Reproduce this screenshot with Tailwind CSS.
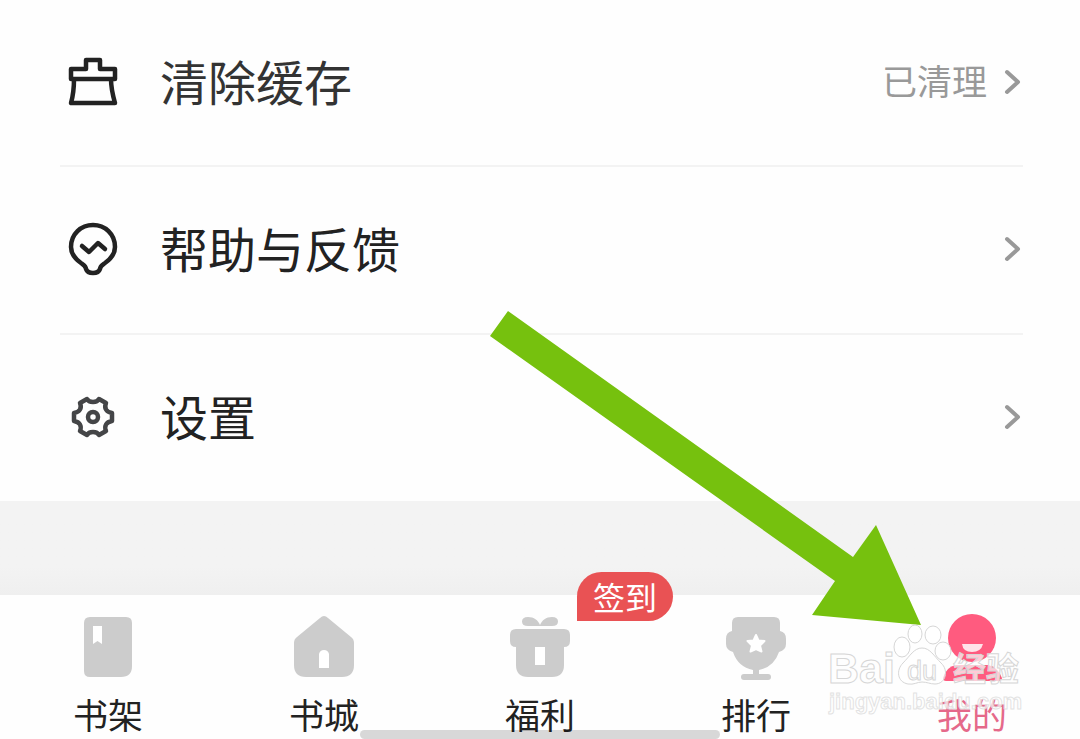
<!DOCTYPE html>
<html lang="zh-CN">
<head>
<meta charset="utf-8">
<meta name="viewport" content="width=device-width, initial-scale=1">
<title>我的</title>
<script src="https://cdn.jsdelivr.net/npm/@tailwindcss/browser@4"></script>
</head>
<body class="relative flex min-h-screen flex-col overflow-hidden bg-[#f3f3f3] font-['Noto_Sans_CJK_SC',sans-serif] text-[#222]">

<main class="bg-[#fefefe] pr-[57px] pl-[60px]">
  <ul class="divide-y-2 divide-[#f3f3f3]">
    <li>
      <button type="button" class="flex h-[165px] w-full items-center pb-[2px] text-left">
        <svg class="ml-2 size-[50px] shrink-0" viewBox="0 0 50 50" fill="none" stroke="#222" stroke-width="4.500" stroke-linejoin="round" aria-hidden="true">
          <path d="M3 12H18V3H32V12H47V22H3ZM6 22C6 31 5 39 3 46H47C45 39 43 31 43 22"/>
        </svg>
        <span class="ml-[42px] flex-1 pb-1 text-[48px] leading-none text-[#333]">清除缓存</span>
        <span class="pb-1 text-[35px] leading-none text-[#999]">已清理</span>
        <svg class="ml-4 h-7 w-5 shrink-0" viewBox="0 0 20 28" fill="none" stroke="#999" stroke-width="4" stroke-linecap="round" stroke-linejoin="round" aria-hidden="true"><path d="M4 4L15 14L4 24"/></svg>
      </button>
    </li>
    <li>
      <button type="button" class="flex h-[166px] w-full items-center pb-[2px] text-left">
        <svg class="ml-2 h-[54px] w-[50px] shrink-0" viewBox="0 0 50 54" fill="none" stroke="#222" stroke-width="4.500" stroke-linecap="round" stroke-linejoin="round" aria-hidden="true">
          <path d="M18 47C18 44 16 43 13 41C6 36 3 31 3 25C3 12 13 3 25 3S47 12 47 25C47 31 44 36 37 41C34 43 32 44 32 47C31 50 28 51 25 51S19 50 18 47Z"/>
          <path d="M14 24L21 30L30 21L37 27"/>
        </svg>
        <span class="ml-[42px] flex-1 pb-1 text-[48px] leading-none">帮助与反馈</span>
        <svg class="ml-4 h-7 w-5 shrink-0" viewBox="0 0 20 28" fill="none" stroke="#999" stroke-width="4" stroke-linecap="round" stroke-linejoin="round" aria-hidden="true"><path d="M4 4L15 14L4 24"/></svg>
      </button>
    </li>
    <li>
      <button type="button" class="flex h-[166px] w-full items-center pb-[2px] text-left">
        <svg class="ml-2 size-[50px] shrink-0" viewBox="0 0 50 50" fill="none" stroke="#444547" stroke-width="4.500" stroke-linejoin="round" aria-hidden="true">
          <path d="M19 7C21 11 29 11 31 7L38 11C36 16 38 20 44 21V29C38 30 36 34 38 39L31 43C29 39 21 39 19 43L12 39C14 34 12 30 6 29V21C12 20 14 16 12 11Z"/>
          <circle cx="25" cy="25" r="5"/>
        </svg>
        <span class="ml-[42px] flex-1 pb-1 text-[48px] leading-none">设置</span>
        <svg class="ml-4 h-7 w-5 shrink-0" viewBox="0 0 20 28" fill="none" stroke="#999" stroke-width="4" stroke-linecap="round" stroke-linejoin="round" aria-hidden="true"><path d="M4 4L15 14L4 24"/></svg>
      </button>
    </li>
  </ul>
</main>

<div class="min-h-[94px] flex-1 bg-linear-to-b from-[#f3f3f3] from-70% to-[#efefef]"></div>

<nav class="relative grid h-36 grid-cols-5 bg-[#fefefe]">
  <a href="#" class="flex flex-col items-center pt-[18px]">
    <svg class="size-[68px]" viewBox="0 0 68 68" aria-hidden="true">
      <path fill="#ccc" d="M16 4H52Q58 4 58 10V53Q58 64 47 64H16Q10 64 10 58V10Q10 4 16 4Z"/>
      <path fill="#fff" d="M19 13H28V31L23.500 28L19 31Z"/>
    </svg>
    <span class="mt-[10px] text-[35px] leading-[46px]">书架</span>
  </a>
  <a href="#" class="flex flex-col items-center pt-[18px]">
    <svg class="size-[68px]" viewBox="0 0 68 68" aria-hidden="true">
      <path fill="#ccc" d="M30 5Q34 1 38 5L61 24Q64 26 64 30V52Q64 64 52 64H16Q4 64 4 52V30Q4 26 7 24Z"/>
      <path fill="#fff" d="M29 55V41Q30 37 34 37T39 41V55Z"/>
    </svg>
    <span class="mt-[10px] text-[35px] leading-[46px]">书城</span>
  </a>
  <a href="#" class="relative flex flex-col items-center pt-[18px]">
    <svg class="size-[68px]" viewBox="0 0 68 68" aria-hidden="true">
      <path fill="#ccc" d="M22 4C28 4 32 7 34 12C36 7 40 4 46 4Q52 4 52 8.500T46 13H22Q16 13 16 8.500T22 4Z"/>
      <path fill="#ccc" d="M10 16H58Q64 16 64 22V28Q64 34 58 34V52Q58 64 46 64H22Q10 64 10 52V34Q4 34 4 28V22Q4 16 10 16Z"/>
      <path fill="#fff" d="M29 34H39V52H29Z"/>
    </svg>
    <span class="mt-[10px] text-[35px] leading-[46px]">福利</span>
    <span class="absolute -top-[23px] left-1/2 ml-[37px] rounded-[25px] rounded-bl-none bg-[#e95254] px-4 text-[32px] leading-[49px] whitespace-nowrap text-white">签到</span>
  </a>
  <a href="#" class="flex flex-col items-center pt-[18px]">
    <svg class="size-[68px]" viewBox="0 0 68 68" aria-hidden="true">
      <path fill="#ccc" d="M16 4H52Q58 4 58 10V18Q64 19 64 26V31Q64 37 57 39Q52 54 37 57V61H46Q49 61 49 64T46 67H22Q19 67 19 64T22 61H31V57Q16 54 11 39Q4 37 4 31V26Q4 19 10 18V10Q10 4 16 4Z"/>
      <path fill="#fff" stroke="#fff" stroke-width="2" stroke-linejoin="round" d="M34 22L36.500 27.500L42.500 28L38 32.500L39.500 38.500L34 36L28.500 38.500L30 32.500L25.500 28L31.500 27.500Z"/>
    </svg>
    <span class="mt-[10px] text-[35px] leading-[46px]">排行</span>
  </a>
  <a href="#" aria-current="page" class="flex flex-col items-center pt-[18px] text-[#e5698a]">
    <svg class="size-[68px]" viewBox="0 0 68 68" aria-hidden="true">
      <circle cx="34" cy="25" r="24" fill="#ff5b7f"/>
      <path fill="#ff5b7f" d="M18 52H50Q60 54 64 65Q64 68 60 68H8Q5 68 5 65Q8 54 18 52Z"/>
      <path fill="#ffe3e9" d="M24 31H45Q43 39 34 39T24 31Z"/>
    </svg>
    <span class="mt-[10px] text-[35px] leading-[46px]">我的</span>
  </a>
  <div class="absolute bottom-0 left-1/3 h-[9px] w-1/3 rounded-full bg-black/15"></div>
</nav>

<svg class="pointer-events-none absolute top-0 left-0 h-[739px] w-[1080px]" viewBox="0 0 1080 739" aria-hidden="true">
  <path fill="#76c10e" d="M508 311L853 557L876 525L921 625L812 615L835 581L490 336Z"/>
  <g fill="#fff" fill-opacity=".7" stroke="#d6d6d6" stroke-width="1" font-family="'Liberation Sans',sans-serif" font-weight="bold">
    <ellipse cx="902" cy="647" rx="8" ry="10"/>
    <ellipse cx="915" cy="634" rx="7" ry="9"/>
    <ellipse cx="933" cy="635" rx="8" ry="9"/>
    <ellipse cx="943" cy="651" rx="8" ry="9"/>
    <path d="M922 648C930 648 934 656 941 663C949 670 946 684 935 684C930 684 927 682 922 682S914 685 908 684C897 682 896 670 903 663C910 656 914 648 922 648Z"/>
    <text x="828" y="683" font-size="43">Bai</text>
    <text x="907" y="680" font-size="27" font-weight="normal">du</text>
    <text x="953" y="681" font-size="33" font-family="'Noto Sans CJK SC',sans-serif">经验</text>
    <text x="829" y="709" font-size="22" stroke-opacity=".7">jingyan.baidu.com</text>
  </g>
</svg>
</body>
</html>
